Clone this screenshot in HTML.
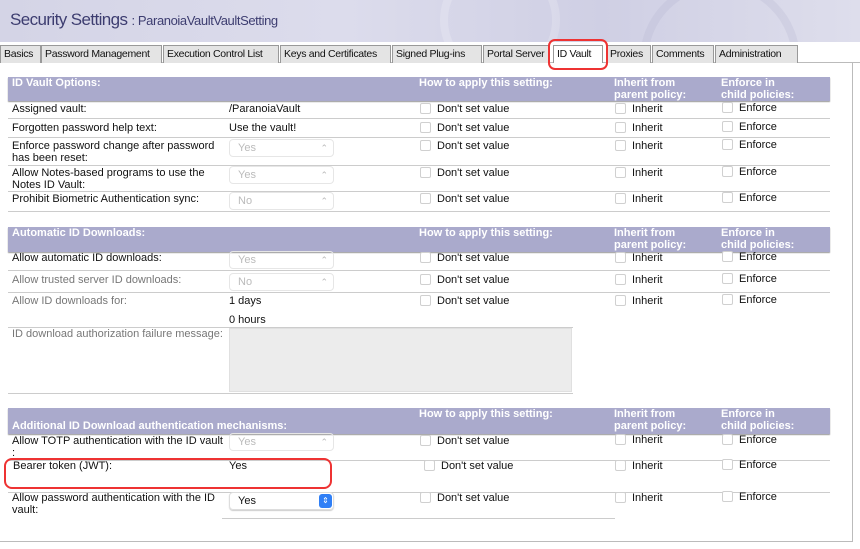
<!DOCTYPE html>
<html><head><meta charset="utf-8">
<style>
*{margin:0;padding:0;box-sizing:border-box}
body{width:860px;height:549px;background:#fff;position:relative;overflow:hidden;font-family:"Liberation Sans",sans-serif;font-size:11px;color:#111}
.a{position:absolute;white-space:nowrap}
.hdr{position:absolute;left:0;top:0;width:860px;height:42px;background:linear-gradient(90deg,#d4d4e6 0%,#dcdcec 40%,#cfcfe4 70%,#dedeec 100%);overflow:hidden}
.gear{position:absolute;border-radius:50%;border:8px solid rgba(255,255,255,.18)}
.tab{position:absolute;top:45px;height:18px;background:#e4e4e4;border:1px solid #999;border-bottom:none;font-size:10.5px;line-height:16px;padding:0 3px;color:#111;white-space:nowrap;overflow:hidden;letter-spacing:-0.3px}
.sec{position:absolute;left:8px;width:822px;background:#aaaacc;color:#fff;font-weight:bold;font-size:11px;box-shadow:0 1px 1px #999}
.line{position:absolute;left:8px;width:822px;height:1px;background:#ccc}
.cb{position:absolute;width:11px;height:11px;border:1px solid #d0d0d0;border-radius:2px;background:#fff}
.sel{position:absolute;left:229px;width:105px;height:18px;border:1px solid #e6e6e6;border-radius:4px;color:#bbb;padding-left:8px;line-height:16px;font-size:11px}
.sel:after{content:"⌃";position:absolute;right:5px;top:0;font-size:9px;color:#bbb}
.g{color:#777}
</style></head><body>
<div class="hdr">
 <div class="gear" style="left:440px;top:-40px;width:120px;height:120px"></div>
 <div class="gear" style="left:640px;top:-20px;width:160px;height:160px;border-color:rgba(170,170,200,.2)"></div>
</div>
<div class="a" style="left:10px;top:10px;font-size:17px;color:#3d3d70;letter-spacing:-0.6px">Security Settings <span style="font-size:13px;letter-spacing:-0.4px">: ParanoiaVaultVaultSetting</span></div>
<div class="a" style="left:0;top:62px;width:860px;height:1px;background:#bbb"></div>
<div class="tab" style="left:0;width:41px">Basics</div>
<div class="tab" style="left:41px;width:121px">Password Management</div>
<div class="tab" style="left:163px;width:116px">Execution Control List</div>
<div class="tab" style="left:280px;width:111px">Keys and Certificates</div>
<div class="tab" style="left:392px;width:90px">Signed Plug-ins</div>
<div class="tab" style="left:483px;width:66px">Portal Server</div>
<div class="tab" style="left:553px;width:50px;background:#fff;height:18px">ID Vault</div>
<div class="tab" style="left:606px;width:45px">Proxies</div>
<div class="tab" style="left:652px;width:62px">Comments</div>
<div class="tab" style="left:715px;width:83px">Administration</div>
<div class="a" style="left:548px;top:39px;width:60px;height:31px;border:2px solid #e33;border-radius:7px"></div>
<div class="a" style="left:852px;top:63px;width:1px;height:479px;background:#bbb"></div>
<div class="a" style="left:0;top:541px;width:853px;height:1px;background:#bbb"></div>

<div class="sec" style="top:77px;height:24px"><span class="a" style="left:4px;top:0">ID Vault Options:</span><span class="a" style="left:411px;top:0">How to apply this setting:</span><span class="a" style="left:606px;top:0;line-height:12px">Inherit from<br>parent policy:</span><span class="a" style="left:713px;top:0;line-height:12px">Enforce in<br>child policies:</span></div>

<div class="a" style="left:12px;top:103px">Assigned vault:</div><div class="a" style="left:229px;top:103px">/ParanoiaVault</div>
<div class="line" style="top:118px"></div>
<div class="a" style="left:12px;top:122px">Forgotten password help text:</div><div class="a" style="left:229px;top:122px">Use the vault!</div>
<div class="line" style="top:137px"></div>
<div class="a" style="left:12px;top:140px;line-height:12px">Enforce password change after password<br>has been reset:</div><div class="sel" style="top:139px">Yes</div>
<div class="line" style="top:165px"></div>
<div class="a" style="left:12px;top:167px;line-height:12px">Allow Notes-based programs to use the<br>Notes ID Vault:</div><div class="sel" style="top:166px">Yes</div>
<div class="line" style="top:191px"></div>
<div class="a" style="left:12px;top:193px">Prohibit Biometric Authentication sync:</div><div class="sel" style="top:192px">No</div>
<div class="line" style="top:211px"></div>

<div class="sec" style="top:227px;height:25px"><span class="a" style="left:4px;top:0">Automatic ID Downloads:</span><span class="a" style="left:411px;top:0">How to apply this setting:</span><span class="a" style="left:606px;top:0;line-height:12px">Inherit from<br>parent policy:</span><span class="a" style="left:713px;top:0;line-height:12px">Enforce in<br>child policies:</span></div>
<div class="a" style="left:12px;top:252px">Allow automatic ID downloads:</div><div class="sel" style="top:251px">Yes</div>
<div class="line" style="top:270px"></div>
<div class="a g" style="left:12px;top:274px">Allow trusted server ID downloads:</div><div class="sel" style="top:273px">No</div>
<div class="line" style="top:292px"></div>
<div class="a g" style="left:12px;top:295px">Allow ID downloads for:</div><div class="a" style="left:229px;top:295px">1 days</div>
<div class="a" style="left:229px;top:314px">0 hours</div>
<div class="line" style="top:327px;width:565px"></div>
<div class="a g" style="left:12px;top:328px">ID download authorization failure message:</div>
<div class="a" style="left:229px;top:328px;width:343px;height:64px;background:#ececec;border:1px solid #e0e0e0"></div>
<div class="line" style="top:393px;width:565px"></div>

<div class="sec" style="top:408px;height:26px"><span class="a" style="left:4px;top:12px">Additional ID Download authentication mechanisms:</span><span class="a" style="left:411px;top:0">How to apply this setting:</span><span class="a" style="left:606px;top:0;line-height:12px">Inherit from<br>parent policy:</span><span class="a" style="left:713px;top:0;line-height:12px">Enforce in<br>child policies:</span></div>
<div class="a" style="left:12px;top:435px;line-height:12px">Allow TOTP authentication with the ID vault<br>:</div><div class="sel" style="top:433px">Yes</div>
<div class="line" style="top:460px"></div>
<div class="a" style="left:13px;top:460px">Bearer token (JWT):</div><div class="a" style="left:229px;top:460px">Yes</div>
<div class="a" style="left:4px;top:458px;width:328px;height:31px;border:2px solid #e33;border-radius:8px"></div>
<div class="line" style="top:492px"></div>
<div class="a" style="left:12px;top:492px;line-height:12px">Allow password authentication with the ID<br>vault:</div>
<div class="sel" style="top:492px;color:#111;border-color:#ddd;box-shadow:0 1px 1px #ccc">Yes</div>
<div class="a" style="left:319px;top:494px;width:13px;height:14px;background:#2f7ff6;border-radius:3px;color:#fff;font-size:8px;text-align:center;line-height:14px">⇕</div>
<div class="line" style="top:518px;left:222px;width:393px"></div>

<div class="cb" style="left:420px;top:103px"></div><div class="a" style="left:437px;top:103px">Don't set value</div>
<div class="cb" style="left:615px;top:103px"></div><div class="a" style="left:632px;top:103px">Inherit</div>
<div class="cb" style="left:722px;top:102px"></div><div class="a" style="left:739px;top:102px">Enforce</div>

<div class="cb" style="left:420px;top:122px"></div><div class="a" style="left:437px;top:122px">Don't set value</div>
<div class="cb" style="left:615px;top:122px"></div><div class="a" style="left:632px;top:122px">Inherit</div>
<div class="cb" style="left:722px;top:121px"></div><div class="a" style="left:739px;top:121px">Enforce</div>

<div class="cb" style="left:420px;top:140px"></div><div class="a" style="left:437px;top:140px">Don't set value</div>
<div class="cb" style="left:615px;top:140px"></div><div class="a" style="left:632px;top:140px">Inherit</div>
<div class="cb" style="left:722px;top:139px"></div><div class="a" style="left:739px;top:139px">Enforce</div>

<div class="cb" style="left:420px;top:167px"></div><div class="a" style="left:437px;top:167px">Don't set value</div>
<div class="cb" style="left:615px;top:167px"></div><div class="a" style="left:632px;top:167px">Inherit</div>
<div class="cb" style="left:722px;top:166px"></div><div class="a" style="left:739px;top:166px">Enforce</div>

<div class="cb" style="left:420px;top:193px"></div><div class="a" style="left:437px;top:193px">Don't set value</div>
<div class="cb" style="left:615px;top:193px"></div><div class="a" style="left:632px;top:193px">Inherit</div>
<div class="cb" style="left:722px;top:192px"></div><div class="a" style="left:739px;top:192px">Enforce</div>

<div class="cb" style="left:420px;top:252px"></div><div class="a" style="left:437px;top:252px">Don't set value</div>
<div class="cb" style="left:615px;top:252px"></div><div class="a" style="left:632px;top:252px">Inherit</div>
<div class="cb" style="left:722px;top:251px"></div><div class="a" style="left:739px;top:251px">Enforce</div>

<div class="cb" style="left:420px;top:274px"></div><div class="a" style="left:437px;top:274px">Don't set value</div>
<div class="cb" style="left:615px;top:274px"></div><div class="a" style="left:632px;top:274px">Inherit</div>
<div class="cb" style="left:722px;top:273px"></div><div class="a" style="left:739px;top:273px">Enforce</div>

<div class="cb" style="left:420px;top:295px"></div><div class="a" style="left:437px;top:295px">Don't set value</div>
<div class="cb" style="left:615px;top:295px"></div><div class="a" style="left:632px;top:295px">Inherit</div>
<div class="cb" style="left:722px;top:294px"></div><div class="a" style="left:739px;top:294px">Enforce</div>

<div class="cb" style="left:420px;top:435px"></div><div class="a" style="left:437px;top:435px">Don't set value</div>
<div class="cb" style="left:615px;top:434px"></div><div class="a" style="left:632px;top:434px">Inherit</div>
<div class="cb" style="left:722px;top:434px"></div><div class="a" style="left:739px;top:434px">Enforce</div>

<div class="cb" style="left:424px;top:460px"></div><div class="a" style="left:441px;top:460px">Don't set value</div>
<div class="cb" style="left:615px;top:460px"></div><div class="a" style="left:632px;top:460px">Inherit</div>
<div class="cb" style="left:722px;top:459px"></div><div class="a" style="left:739px;top:459px">Enforce</div>

<div class="cb" style="left:420px;top:492px"></div><div class="a" style="left:437px;top:492px">Don't set value</div>
<div class="cb" style="left:615px;top:492px"></div><div class="a" style="left:632px;top:492px">Inherit</div>
<div class="cb" style="left:722px;top:491px"></div><div class="a" style="left:739px;top:491px">Enforce</div>
</body></html>
